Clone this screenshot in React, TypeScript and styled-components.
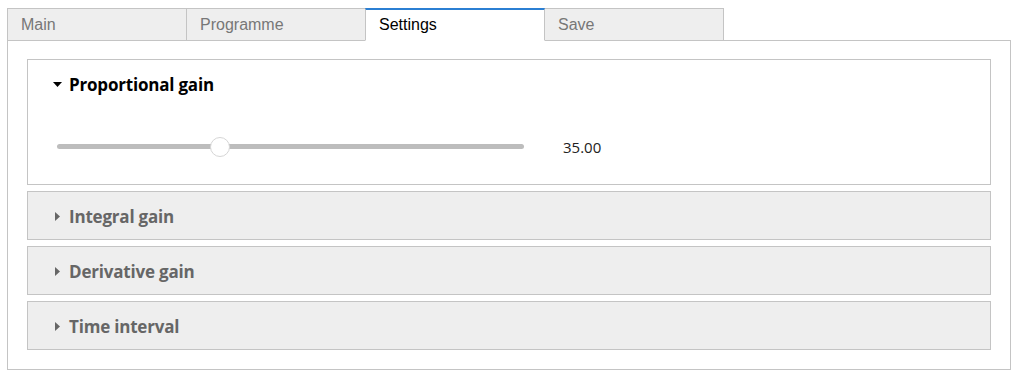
import { useState } from "react";
import styled, { createGlobalStyle } from "styled-components";

const GlobalStyle = createGlobalStyle`
    html, body {
        margin: 0;
        padding: 0;
        background: #ffffff;
    }
    body {
        padding: 8px 0 0 7px;
        font-family: "Liberation Sans", Arial, sans-serif;
    }
`;

interface ActiveProps {
    $active: boolean;
}

const Page = styled.div`
    width: 1004px;
    display: flex;
    flex-direction: column;
`;

const TabRow = styled.div`
    display: flex;
    margin-bottom: -1px;
    position: relative;
    z-index: 1;
`;

const Tab = styled.div<ActiveProps>`
    box-sizing: border-box;
    width: 180px;
    height: 33px;
    margin-right: -1px;
    padding: 0 13px;
    display: flex;
    align-items: center;
    font-size: 16px;
    cursor: pointer;
    border: 1px solid #c4c4c4;
    border-top: ${(props) => (props.$active ? "2px solid #2b7fd3" : "1px solid #c4c4c4")};
    border-bottom-color: ${(props) => (props.$active ? "#ffffff" : "#c4c4c4")};
    background-color: ${(props) => (props.$active ? "#ffffff" : "#eeeeee")};
    color: ${(props) => (props.$active ? "#000000" : "#777777")};
    position: relative;
    z-index: ${(props) => (props.$active ? 2 : 1)};
`;

const Panel = styled.div`
    box-sizing: border-box;
    height: 330px;
    border: 1px solid #c4c4c4;
    padding: 18px 19px 19px 19px;
    display: flex;
    flex-direction: column;
    gap: 6px;
`;

const Item = styled.div<ActiveProps>`
    border: 1px solid #c4c4c4;
    background-color: ${(props) => (props.$active ? "#ffffff" : "#eeeeee")};
    font-family: "Open Sans", "Noto Sans", sans-serif;
`;

const Header = styled.div<ActiveProps>`
    height: 47px;
    display: flex;
    align-items: center;
    padding: 1px 0 0 25px;
    box-sizing: border-box;
    gap: 7px;
    font-size: 17px;
    font-weight: 700;
    letter-spacing: -0.2px;
    cursor: pointer;
    color: ${(props) => (props.$active ? "#000000" : "#666666")};
`;

const Arrow = styled.span<ActiveProps>`
    width: 9px;
    display: flex;
    justify-content: ${(props) => (props.$active ? "flex-start" : "center")};
    svg {
        display: block;
    }
`;

const Body = styled.div`
    height: 77px;
    display: flex;
    align-items: center;
    padding: 2px 0 0 29px;
    box-sizing: border-box;
    gap: 39px;
`;

const Slider = styled.div`
    position: relative;
    width: 467px;
    height: 20px;
    display: flex;
    align-items: center;
    cursor: pointer;
`;

const Track = styled.div`
    width: 100%;
    height: 5px;
    border-radius: 3px;
    background-color: #bdbdbd;
`;

const Thumb = styled.div`
    position: absolute;
    top: 0;
    box-sizing: border-box;
    width: 20px;
    height: 20px;
    margin-left: -10px;
    border-radius: 50%;
    background-color: #ffffff;
    border: 1px solid #d6d6d6;
`;

const Value = styled.span`
    font-size: 15px;
    color: #222222;
`;

const tabs = ["Main", "Programme", "Settings", "Save"];
const sections = ["Proportional gain", "Integral gain", "Derivative gain", "Time interval"];

const App = () => {
    const [tab, setTab] = useState(2);
    const [open, setOpen] = useState(0);
    const value = 35;

    return (
        <Page>
            <GlobalStyle />
            <TabRow>
                {tabs.map((name, i) => (
                    <Tab key={name} $active={tab === i} onClick={() => setTab(i)}>
                        {name}
                    </Tab>
                ))}
            </TabRow>
            <Panel>
                {sections.map((name, i) => (
                    <Item key={name} $active={open === i}>
                        <Header $active={open === i} onClick={() => setOpen(i)}>
                            <Arrow $active={open === i}>
                                {open === i ? (
                                    <svg width="9" height="5" viewBox="0 0 9 5">
                                        <path d="M0 0h9L4.5 5z" fill="#000" />
                                    </svg>
                                ) : (
                                    <svg width="5" height="9" viewBox="0 0 5 9">
                                        <path d="M0 0l5 4.5L0 9z" fill="#666" />
                                    </svg>
                                )}
                            </Arrow>
                            {name}
                        </Header>
                        {open === i && (
                            <Body>
                                <Slider>
                                    <Track />
                                    <Thumb style={{ left: `${value}%` }} />
                                </Slider>
                                <Value>{value.toFixed(2)}</Value>
                            </Body>
                        )}
                    </Item>
                ))}
            </Panel>
        </Page>
    );
};

export default App;
